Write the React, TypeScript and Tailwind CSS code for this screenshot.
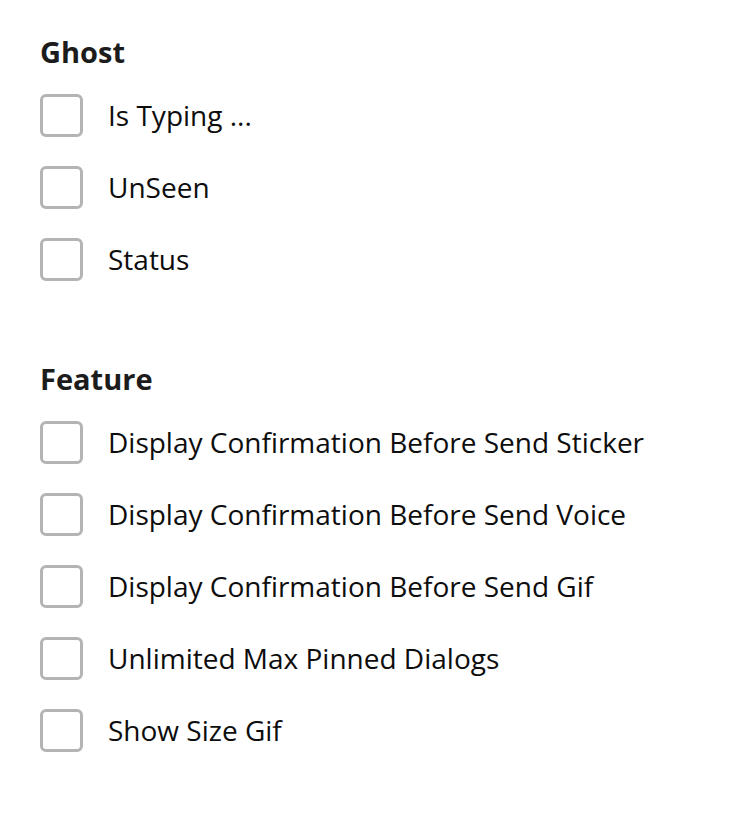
const ghost = ["Is Typing ...", "UnSeen", "Status"];
const feature = [
    "Display Confirmation Before Send Sticker",
    "Display Confirmation Before Send Voice",
    "Display Confirmation Before Send Gif",
    "Unlimited Max Pinned Dialogs",
    "Show Size Gif",
];

function Option({label}: {label: string}) {
    return (
        <label className="flex h-[72px] items-center">
            <span className="h-[43px] w-[43px] shrink-0 rounded-[6px] border-[3px] border-[#b4b4b4] bg-white" />
            <span className="ml-[25px] text-[28px] leading-[36px] text-[#0d0d0d]">{label}</span>
        </label>
    );
}

function Section({title, items}: {title: string; items: string[]}) {
    return (
        <div>
            <div className="mb-[9px] text-[29px] font-bold leading-[36px] text-[#1c1c1c]">{title}</div>
            {items.map((item) => (
                <Option key={item} label={item} />
            ))}
        </div>
    );
}

export default function App() {
    return (
        <div className="min-h-[832px] bg-white px-10 pt-[34px] font-['Open_Sans',sans-serif]">
            <Section title="Ghost" items={ghost} />
            <div className="h-[66px]" />
            <Section title="Feature" items={feature} />
        </div>
    );
}
